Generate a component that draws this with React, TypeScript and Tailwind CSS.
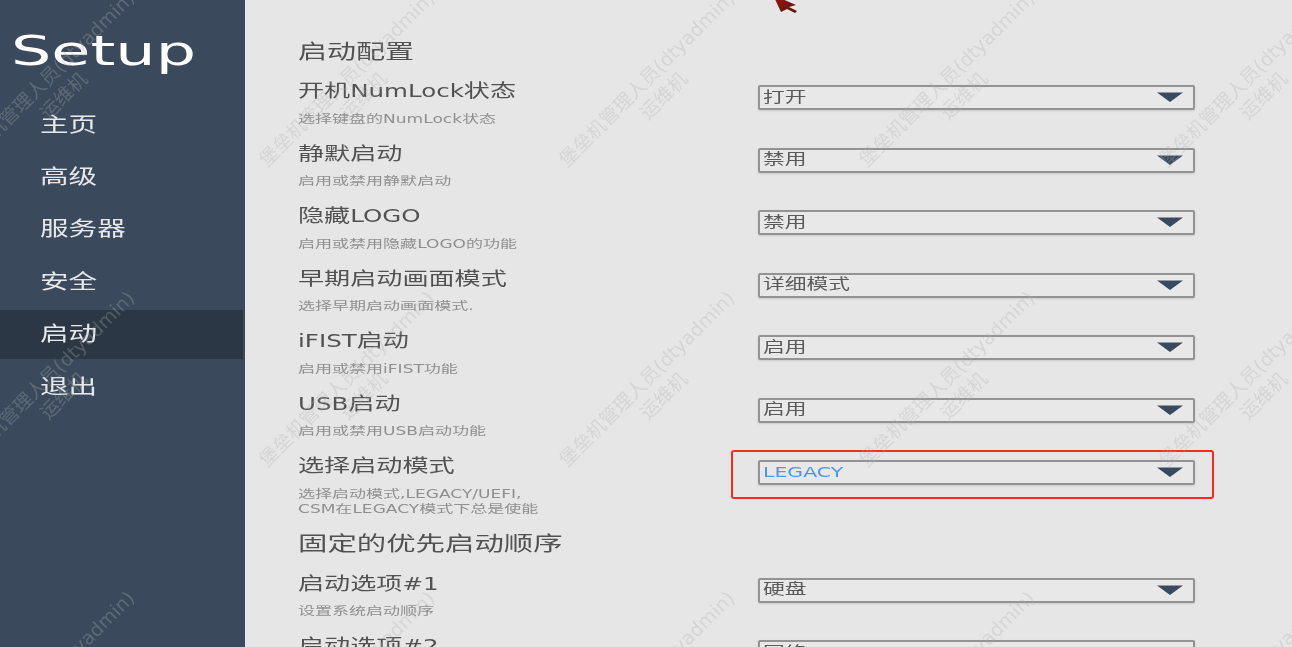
import React from "react";

const FONT = "[font-family:'DejaVu_Sans','Noto_Sans_CJK_SC',sans-serif]";

type Row = { label: string; desc: string[]; value: string; blue?: boolean };

const rowsA: Row[] = [
  { label: "开机NumLock状态", desc: ["选择键盘的NumLock状态"], value: "打开" },
  { label: "静默启动", desc: ["启用或禁用静默启动"], value: "禁用" },
  { label: "隐藏LOGO", desc: ["启用或禁用隐藏LOGO的功能"], value: "禁用" },
  { label: "早期启动画面模式", desc: ["选择早期启动画面模式."], value: "详细模式" },
  { label: "iFIST启动", desc: ["启用或禁用iFIST功能"], value: "启用" },
  { label: "USB启动", desc: ["启用或禁用USB启动功能"], value: "启用" },
  {
    label: "选择启动模式",
    desc: ["选择启动模式,LEGACY/UEFI,", "CSM在LEGACY模式下总是使能"],
    value: "LEGACY",
    blue: true,
  },
];

const rowsB: Row[] = [
  { label: "启动选项#1", desc: ["设置系统启动顺序"], value: "硬盘" },
  { label: "启动选项#2", desc: ["设置系统启动顺序"], value: "网络" },
];

const nav = ["主页", "高级", "服务器", "安全", "启动", "退出"];

function Mixed({ text }: { text: string }) {
  const parts = text.split(/([A-Za-z#0-9]+)/).filter(Boolean);
  return (
    <>
      {parts.map((p, i) =>
        /^[A-Za-z#0-9]+$/.test(p) ? (
          <span key={i} className="text-[0.94em]">
            {p}
          </span>
        ) : (
          <span key={i}>{p}</span>
        )
      )}
    </>
  );
}

function Select({ value, blue }: { value: string; blue?: boolean }) {
  return (
    <div className="relative mt-[5px] flex h-[25px] w-[437px] items-center justify-between rounded-[2px] border-2 border-[#939393] bg-[#e8e8e8] pl-[3px] pr-[10px] shadow-[0_1px_2px_rgba(120,130,120,0.25)]">
      <span
        className={
          "origin-left scale-x-[1.45] whitespace-nowrap pb-[2px] text-[15px] leading-[18px] " +
          (blue ? "text-[#4a97f5]" : "text-[#5a5a5a]")
        }
      >
        <Mixed text={value} />
      </span>
      <svg width="26" height="10" viewBox="0 0 26 10" className="mb-[1px] block">
        <path d="M0 0.5H26L13 10Z" fill="#3a4a5e" />
      </svg>
    </div>
  );
}

function SettingRow({ row }: { row: Row }) {
  return (
    <div className="flex min-h-[62.5px]">
      <div className="w-[460px] shrink-0">
        <div className="origin-left scale-x-[1.45] whitespace-nowrap text-[18px] leading-[22px] text-[#525252]">
          <Mixed text={row.label} />
        </div>
        <div className="mt-[9.5px]">
          {row.desc.map((d) => (
            <div
              key={d}
              className="origin-left scale-x-[1.48] whitespace-nowrap text-[11.5px] leading-[15.5px] text-[#8f8f8f]"
            >
              {d}
            </div>
          ))}
        </div>
      </div>
      <div className="relative">
        <Select value={row.value} blue={row.blue} />
      </div>
    </div>
  );
}

function Watermarks() {
  const items: { x: number; y: number }[] = [];
  for (const y of [75, 375, 675]) for (const x of [55, 355, 655, 955, 1255]) items.push({ x, y });
  return (
    <div className="pointer-events-none absolute inset-0 overflow-hidden">
      {items.map((p) => (
        <div
          key={`${p.x}-${p.y}`}
          className="absolute w-[300px] -rotate-45 text-center text-[19px] leading-[24px] text-[#b0b0b0]/30"
          style={{ left: p.x - 150, top: p.y - 12 }}
        >
          <div>堡垒机管理人员(dtyadmin)</div>
          <div>运维机</div>
        </div>
      ))}
    </div>
  );
}

export default function App() {
  return (
    <div className={"relative flex h-[647px] w-[1292px] overflow-hidden bg-[#e6e6e6] blur-[0.5px] " + FONT}>
      <aside className="h-full w-[245px] shrink-0 bg-[#3a4a5c]">
        <div className="flex h-[98.5px] items-start pl-[11px] pt-[21px]">
          <span className="origin-left scale-x-[1.55] text-[41px] leading-[60px] text-white">Setup</span>
        </div>
        <nav className="flex flex-col pr-[2px]">
          {nav.map((n) => (
            <div key={n} className="flex h-[52.4px] items-center">
              <div
                className={
                  "mt-[1px] flex h-[49px] w-full items-center pl-[40px] " + (n === "启动" ? "bg-[#2b3744]" : "")
                }
              >
                <span className="origin-left scale-x-[1.43] pb-[1px] text-[20px] text-[#e6e8ea]">{n}</span>
              </div>
            </div>
          ))}
        </nav>
      </aside>

      <main className="min-w-0 flex-1 pl-[53px] pt-[38px]">
        <h2 className="h-[42px] origin-left scale-x-[1.45] text-[20px] font-normal leading-[28px] text-[#525252]">
          启动配置
        </h2>
        {rowsA.map((r) => (
          <SettingRow key={r.label} row={r} />
        ))}
        <h2 className="mt-[12.5px] h-[42.5px] origin-left scale-x-[1.47] text-[20px] font-normal leading-[28px] text-[#525252]">
          固定的优先启动顺序
        </h2>
        {rowsB.map((r) => (
          <SettingRow key={r.label} row={r} />
        ))}
      </main>

      <div className="pointer-events-none absolute left-[731px] top-[450px] h-[49px] w-[483px] rounded-[3px] border-[2px] border-[#fb2a1f]" />

      <svg className="pointer-events-none absolute left-[770px] top-0" width="30" height="15" viewBox="0 0 30 15">
        <defs>
          <linearGradient id="cur" x1="0" y1="0" x2="1" y2="1">
            <stop offset="0" stopColor="#a81410" />
            <stop offset="1" stopColor="#4f1712" />
          </linearGradient>
        </defs>
        <path d="M3 -5L26 5L19 7L27 11L25 13L17 9L11 12Z" fill="url(#cur)" />
      </svg>

      <Watermarks />
    </div>
  );
}
